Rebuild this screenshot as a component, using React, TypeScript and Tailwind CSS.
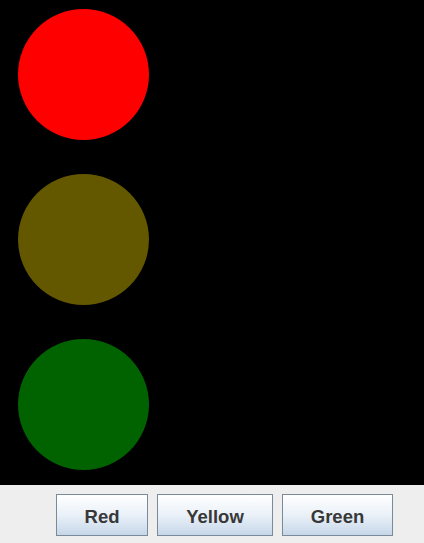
import React from "react";

function Btn({ label, w }: { label: string; w: string }) {
  return (
    <button
      className={`${w} h-[42px] border border-[#7a8a99] bg-gradient-to-b from-[#ffffff] via-[#eaf1f8] to-[#c6d7e9] text-[18.5px] font-bold text-[#383838] flex items-center justify-center pt-[3px]`}
      style={{ fontFamily: '"Liberation Sans", Arial, sans-serif' }}
    >
      {label}
    </button>
  );
}

export default function App() {
  return (
    <div className="w-[424px] h-[543px] flex flex-col bg-[#eeeeee]">
      <div className="h-[485px] bg-black flex flex-col pl-[18px] pt-[9px] gap-[34px]">
        <div className="w-[131px] h-[131px] rounded-full bg-[#ff0000]" />
        <div className="w-[131px] h-[131px] rounded-full bg-[#635700]" />
        <div className="w-[131px] h-[131px] rounded-full bg-[#006300]" />
      </div>
      <div className="flex-1 flex items-start pt-[9px] pl-[56px] gap-[9px]">
        <Btn label="Red" w="w-[92px]" />
        <Btn label="Yellow" w="w-[116px]" />
        <Btn label="Green" w="w-[111px]" />
      </div>
    </div>
  );
}
